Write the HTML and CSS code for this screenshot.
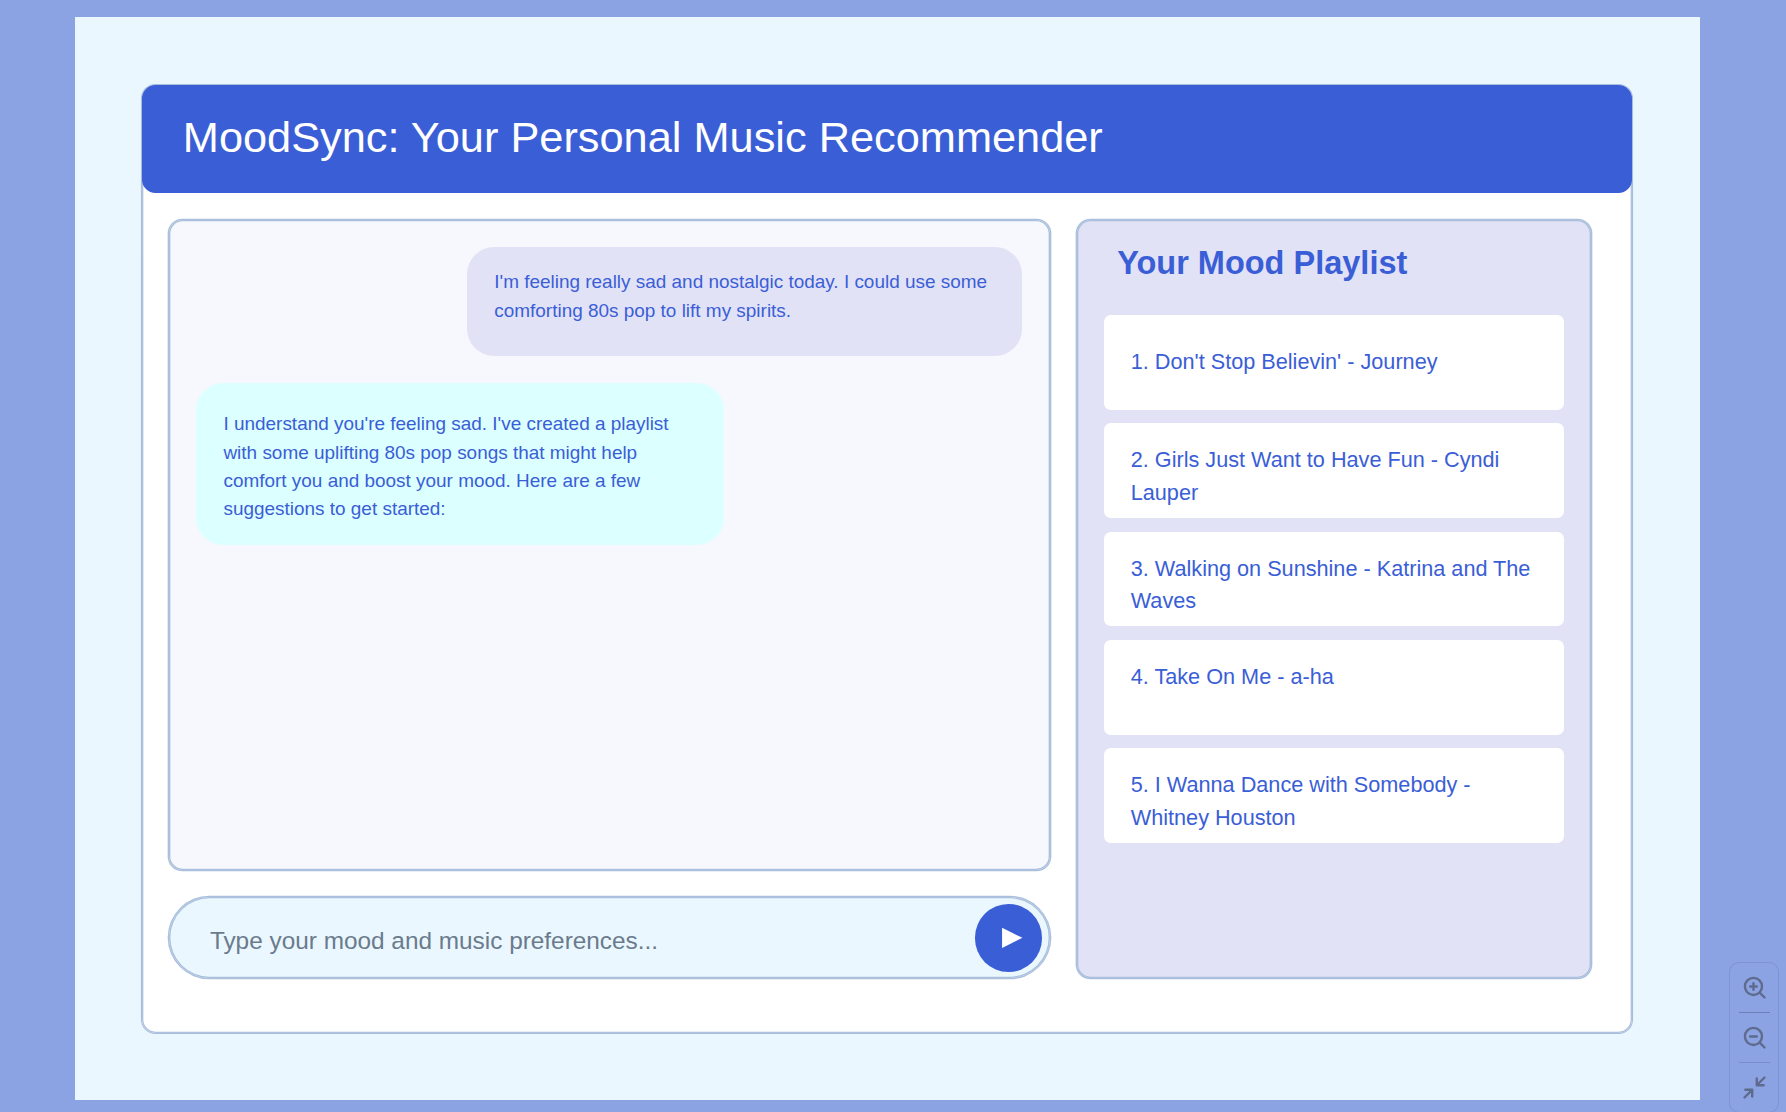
FILE: index.html
```html
<!DOCTYPE html>
<html lang="en">
<head>
<meta charset="utf-8">
<title>MoodSync</title>
<link rel="stylesheet" href="styles.css">
</head>
<body>
<div class="canvas">
  <main class="app">
    <header class="app-header"><h1 class="app-title">MoodSync: Your Personal Music Recommender</h1></header>
    <div class="columns">
      <section class="conversation">
        <div class="messages">
          <p class="message message-user">I'm feeling really sad and nostalgic today. I could use some<br>comforting 80s pop to lift my spirits.</p>
          <p class="message message-bot">I understand you're feeling sad. I've created a playlist<br>with some uplifting 80s pop songs that might help<br>comfort you and boost your mood. Here are a few<br>suggestions to get started:</p>
        </div>
        <form class="composer">
          <input class="composer-input" type="text" placeholder="Type your mood and music preferences..." aria-label="Message">
          <button class="send" type="button" aria-label="Send">
            <svg class="send-icon" viewBox="0 0 50 50"><path d="M20 17.5v15L35 25z" fill="#fff"/></svg>
          </button>
        </form>
      </section>
      <aside class="playlist">
        <h2 class="playlist-title">Your Mood Playlist</h2>
        <ul class="songs">
          <li class="song song-lead">1. Don't Stop Believin' - Journey</li>
          <li class="song">2. Girls Just Want to Have Fun - Cyndi<br>Lauper</li>
          <li class="song">3. Walking on Sunshine - Katrina and The<br>Waves</li>
          <li class="song">4. Take On Me - a-ha</li>
          <li class="song">5. I Wanna Dance with Somebody -<br>Whitney Houston</li>
        </ul>
      </aside>
    </div>
  </main>
</div>
<div class="zoom-bar">
  <button class="zoom-button" type="button" aria-label="Zoom in">
    <svg class="zoom-icon" viewBox="0 0 24 24"><circle cx="11" cy="11" r="8.2"/><path d="M17 17l4.6 4.6M11 7.8v6.4M7.8 11h6.4"/></svg>
  </button>
  <button class="zoom-button" type="button" aria-label="Zoom out">
    <svg class="zoom-icon" viewBox="0 0 24 24"><circle cx="11" cy="11" r="8.2"/><path d="M17 17l4.6 4.6M7.8 11h6.4"/></svg>
  </button>
  <button class="zoom-button" type="button" aria-label="Fit to screen">
    <svg class="zoom-icon" viewBox="0 0 24 24"><path d="M21.6 2.4l-7.2 7.2M14.2 3.4v6.4h6.6M2.4 21.6l7.2-7.2M3.2 14.2h6.6v6.4"/></svg>
  </button>
</div>
</body>
</html>
```
FILE: styles.css
```css
/* 1rem is ten units of the 1200 x 800 canvas */
html { font-size: 13.542px; }
* { box-sizing: border-box; }
body {
  margin: 0;
  height: 1112px;
  overflow: hidden;
  padding: 17px 0 0 74.5px;
  background: #8ba3e3;
  font-family: "Liberation Sans", Arial, sans-serif;
  color: #3a5ed6;
}
h1, h2, p, ul { margin: 0; padding: 0; }
button { border: 0; padding: 0; background: none; }

.canvas {
  width: 120rem;
  height: 80rem;
  padding: 5rem;
  background: #ebf7fe;
}
.app {
  width: 110rem;
  height: 70rem;
  border-radius: 1rem;
  background: #fff;
  box-shadow: 0 0 0 0.08rem #a9bedd, inset 0 0 0 0.1rem #afc2de;
}
.app-header {
  height: 8rem;
  padding-left: 3rem;
  border-radius: 1rem;
  background: #3a5ed6;
}
.app-title {
  font-size: 3.2rem;
  line-height: 7.8rem;
  font-weight: 400;
  color: #fff;
}
.columns {
  display: flex;
  gap: 2rem;
  padding: 2rem;
}
.conversation {
  display: flex;
  flex-direction: column;
  gap: 2rem;
  width: 65rem;
}
.messages, .composer, .playlist {
  box-shadow: 0 0 0 0.1rem #abc0dd, inset 0 0 0 0.1rem #abc0dd;
}
.messages {
  display: flex;
  flex-direction: column;
  gap: 2rem;
  height: 48rem;
  padding: 2rem;
  border-radius: 1rem;
  background: #f7f8fe;
}
.message {
  padding: 0 2rem;
  border-radius: 2rem;
  font-size: 1.4rem;
  line-height: 2.1rem;
  white-space: nowrap;
}
.message-user {
  align-self: flex-end;
  width: 41rem;
  height: 8rem;
  padding-top: 1.55rem;
  background: #e2e2f7;
}
.message-bot {
  width: 39rem;
  height: 12rem;
  padding-top: 2.03rem;
  background: #dcffff;
}
.composer {
  display: flex;
  align-items: center;
  height: 6rem;
  padding-right: 0.53rem;
  border-radius: 3rem;
  background: #ebf7fe;
}
.composer-input {
  flex: 1;
  height: 5rem;
  padding: 0.5rem 0 0 3rem;
  border: 0;
  outline: 0;
  background: none;
  font: 1.8rem "Liberation Sans", Arial, sans-serif;
}
.composer-input::placeholder { color: #6a7b8d; }
.send {
  width: 5rem;
  height: 5rem;
  border-radius: 50%;
  background: #3a5ed6;
}
.send-icon { display: block; width: 5rem; height: 5rem; }

.playlist {
  width: 38rem;
  height: 56rem;
  padding: 0 2rem;
  border-radius: 1rem;
  background: #e2e2f7;
}
.playlist-title {
  height: 7rem;
  padding: 1.2rem 0 0 1rem;
  font-size: 2.4rem;
  line-height: 4rem;
}
.songs {
  display: flex;
  flex-direction: column;
  gap: 1rem;
  list-style: none;
}
.song {
  height: 7rem;
  padding: 1.57rem 0 0 2rem;
  border-radius: 0.5rem;
  background: #fff;
  font-size: 1.6rem;
  line-height: 2.4rem;
  white-space: nowrap;
}
.song-lead { padding-top: 2.28rem; }

.zoom-bar {
  position: absolute;
  left: 1729px;
  top: 962px;
  width: 50px;
  height: 151px;
  display: flex;
  flex-direction: column;
  align-items: center;
  border: 1px solid #7e93d0;
  border-radius: 10px;
}
.zoom-button {
  display: flex;
  align-items: center;
  justify-content: center;
  width: 31px;
  height: 50px;
}
.zoom-button:first-child { height: 49px; }
.zoom-button + .zoom-button { border-top: 1px solid #6b80b8; }
.zoom-button:last-child { border-top-color: #788dc9; }
.zoom-icon {
  width: 25px;
  height: 25px;
  fill: none;
  stroke: #5f6b8c;
  stroke-width: 2.3;
  stroke-linecap: round;
  stroke-linejoin: round;
}
```
